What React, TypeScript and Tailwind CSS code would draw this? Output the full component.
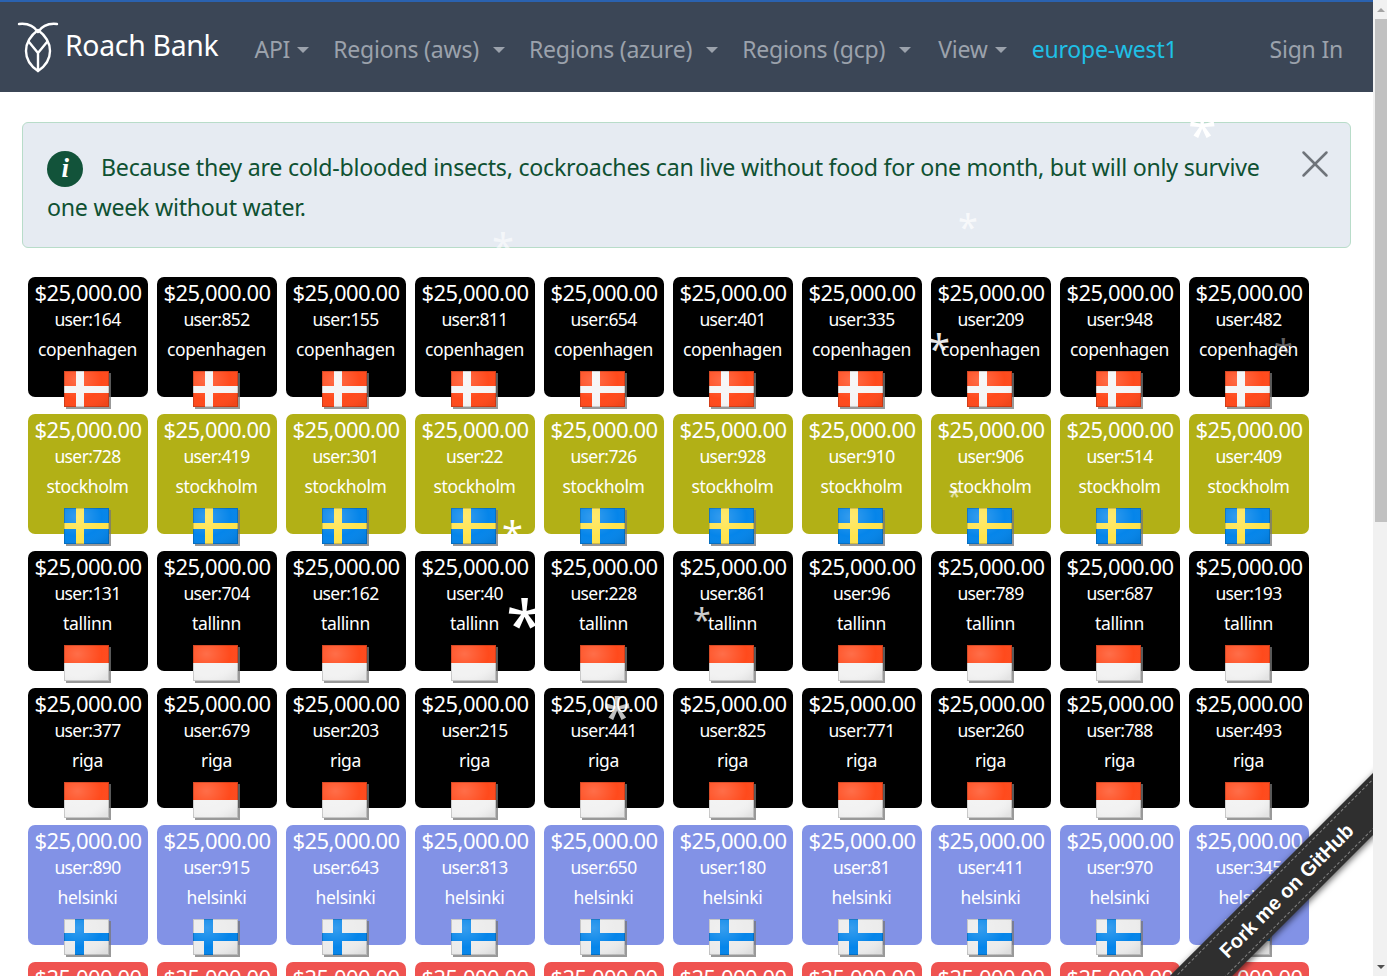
import { X } from 'lucide-react';

const font = { fontFamily: '"Noto Sans", sans-serif' };

const rows = [
  { city: 'copenhagen', bg: 'bg-black', flag: 'dk', users: [164, 852, 155, 811, 654, 401, 335, 209, 948, 482] },
  { city: 'stockholm', bg: 'bg-[#b2b016]', flag: 'se', users: [728, 419, 301, 22, 726, 928, 910, 906, 514, 409] },
  { city: 'tallinn', bg: 'bg-black', flag: 'id', users: [131, 704, 162, 40, 228, 861, 96, 789, 687, 193] },
  { city: 'riga', bg: 'bg-black', flag: 'id', users: [377, 679, 203, 215, 441, 825, 771, 260, 788, 493] },
  { city: 'helsinki', bg: 'bg-[#8292e6]', flag: 'fi', users: [890, 915, 643, 813, 650, 180, 81, 411, 970, 345] },
  { city: 'oslo', bg: 'bg-[#ef5350]', flag: 'dk', users: [101, 102, 103, 104, 105, 106, 107, 108, 109, 110] },
];

const flakes = [
  { x: 1188, y: 108, size: 'text-[52px]', color: 'text-white' },
  { x: 958, y: 209, size: 'text-[36px]', color: 'text-white/70' },
  { x: 492, y: 227, size: 'text-[40px]', color: 'text-white/60' },
  { x: 928, y: 328, size: 'text-[40px]', color: 'text-white/90' },
  { x: 1274, y: 334, size: 'text-[34px]', color: 'text-white/40' },
  { x: 948, y: 484, size: 'text-[24px]', color: 'text-white/60' },
  { x: 502, y: 515, size: 'text-[38px]', color: 'text-white' },
  { x: 506, y: 590, size: 'text-[68px]', color: 'text-white' },
  { x: 693, y: 604, size: 'text-[32px]', color: 'text-white/80' },
  { x: 603, y: 690, size: 'text-[52px]', color: 'text-white/75' },
];

function Flag({ kind }: { kind: string }) {
  return (
    <svg width="48" height="40" viewBox="0 0 48 40" className="block">
      <defs>
        <radialGradient id={`gloss-${kind}`} cx="0.3" cy="0.25" r="0.9">
          <stop offset="0" stopColor="#fff" stopOpacity="0.2" />
          <stop offset="0.6" stopColor="#fff" stopOpacity="0" />
          <stop offset="1" stopColor="#000" stopOpacity="0.06" />
        </radialGradient>
      </defs>
      <rect x="3" y="3" width="45" height="36" fill="#777" opacity="0.75" />
      {kind === 'dk' && (
        <>
          <rect x="1" y="1" width="45" height="36" fill="#ff4a1c" />
          <rect x="13" y="1" width="8" height="36" fill="#f5f5f5" />
          <rect x="1" y="16" width="45" height="7" fill="#f5f5f5" />
        </>
      )}
      {kind === 'se' && (
        <>
          <rect x="1" y="1" width="45" height="36" fill="#0585ea" />
          <rect x="13" y="1" width="8" height="36" fill="#ffe44d" />
          <rect x="1" y="16" width="45" height="6" fill="#ffe44d" />
        </>
      )}
      {kind === 'id' && (
        <>
          <rect x="1" y="1" width="45" height="18" fill="#ff4a1c" />
          <rect x="1" y="19" width="45" height="18" fill="#f2f2f2" />
        </>
      )}
      {kind === 'fi' && (
        <>
          <rect x="1" y="1" width="45" height="36" fill="#ececec" />
          <rect x="12" y="1" width="9" height="36" fill="#0585ea" />
          <rect x="1" y="15" width="45" height="8" fill="#0585ea" />
        </>
      )}
      <rect x="1" y="1" width="45" height="36" fill={`url(#gloss-${kind})`} />
      <rect x="1.5" y="1.5" width="44" height="35" fill="none" stroke="#000" strokeOpacity="0.16" />
    </svg>
  );
}

function Logo() {
  return (
    <svg width="42" height="52" viewBox="0 0 42 52" fill="none" stroke="#fff" strokeWidth="2.4" strokeLinecap="round" strokeLinejoin="round">
      <path d="M2 3C11 2 17 5 21 11C25 5 31 2 40 3" />
      <path d="M21 9C29 15 33 23 33 30C33 39 27 46 21 50C15 46 9 39 9 30C9 23 13 15 21 9Z" />
      <path d="M21 50V32L12 21M21 32L30 21" />
    </svg>
  );
}

function Caret({ spaced }: { spaced?: boolean }) {
  return <span className={`inline-block align-middle border-x-[6.5px] border-t-[6.5px] border-x-transparent border-t-current ${spaced ? 'ml-[14px]' : 'ml-[7px]'} mb-1`} />;
}

function Card({ user, city, bg, flag }: { user: number; city: string; bg: string; flag: string }) {
  return (
    <div className={`${bg} w-[120px] h-[120px] rounded-[7px] flex flex-col items-center text-white shrink-0`}>
      <div className="text-[22px] leading-[32px] tracking-[-0.55px] whitespace-nowrap mt-[-1px]">$25,000.00</div>
      <div className="text-[17.5px] leading-[22px] tracking-[-0.6px] mt-[-0.5px] pr-[1px]">user:{user}</div>
      <div className="text-[17.5px] leading-[24px] tracking-[-0.35px] mt-[7px] pr-[1px]">{city}</div>
      <div className="mt-[9px] self-start ml-[35px]">
        <Flag kind={flag} />
      </div>
    </div>
  );
}

export default function App() {
  return (
    <div className="relative flex h-[976px] w-[1387px] overflow-hidden bg-white" style={font}>
      <div className="relative w-[1373px] h-full overflow-hidden">
        <nav className="h-[92px] bg-[#3b4656] border-t-2 border-[#2a62b0] flex items-center pl-[17px] text-[#9ba2ac] text-[23px] tracking-[-0.2px]">
          <Logo />
          <span className="ml-[6px] text-white text-[28.4px] tracking-[-0.3px] mt-[-3px]">Roach Bank</span>
          <a className="ml-[36px] mt-[4px] whitespace-nowrap">API<Caret /></a>
          <a className="ml-[24px] mt-[4px] whitespace-nowrap">Regions (aws)<Caret spaced /></a>
          <a className="ml-[24px] mt-[4px] whitespace-nowrap">Regions (azure)<Caret spaced /></a>
          <a className="ml-[24px] mt-[4px] whitespace-nowrap">Regions (gcp)<Caret spaced /></a>
          <a className="ml-[27px] mt-[4px] whitespace-nowrap">View<Caret /></a>
          <a className="ml-[25px] mt-[4px] text-[#1fc0e6] whitespace-nowrap">europe-west1</a>
          <a className="ml-auto mr-[30px] mt-[4px] whitespace-nowrap">Sign In</a>
        </nav>

        <div className="mx-[22px] mt-[30px] h-[126px] rounded-[6px] border border-[#b8dcc9] bg-[#e6ebf2] text-[#0f5132] pl-[24px] pt-[24px] pr-[12px] flex items-start">
          <p className="w-[1225px] text-[23.2px] leading-[40px] tracking-[-0.255px]">
            <span className="inline-flex align-middle items-center justify-center w-9 h-9 my-[-4px] rounded-full bg-[#12533a] text-white italic font-bold text-[27px] leading-none mr-[18px] mb-[-2px]" style={{ fontFamily: '"Liberation Serif", serif' }}>i</span>
            Because they are cold-blooded insects, cockroaches can live without food for one month, but will only survive one week without water.
          </p>
          <X className="ml-[21px] mt-[-6px] shrink-0 text-[#6f747a]" size={46} strokeWidth={1.3} />
        </div>

        <div className="mt-[29px] pl-[28px] flex flex-col gap-[17px]">
          {rows.map((row) => (
            <div key={row.city} className="flex gap-[9px]">
              {row.users.map((user) => (
                <Card key={user} user={user} city={row.city} bg={row.bg} flag={row.flag} />
              ))}
            </div>
          ))}
        </div>

        {flakes.map((f, i) => (
          <span key={i} className={`absolute leading-none ${f.size} ${f.color}`} style={{ left: f.x, top: f.y }}>*</span>
        ))}

        {/* ribbon, clipped by the main column */}
        <div className="absolute right-[-116px] bottom-[16px] w-[500px] h-[44px] bg-[#2f2f2f] rotate-[-45deg] shadow-[0_2px_6px_rgba(0,0,0,0.6)] flex items-center justify-center">
          <div className="w-full h-[36px] border-y border-dashed border-white/40 flex items-center justify-center pl-[134px] text-white font-bold text-[20px] whitespace-nowrap" style={{ fontFamily: '"Liberation Sans", sans-serif' }}>
            Fork me on GitHub
          </div>
        </div>
      </div>

      <div className="w-[14px] h-full bg-[#f1f1f1] flex flex-col">
        <div className="h-[19px] flex items-center justify-center pl-[2px]">
          <span className="border-x-[4px] border-b-[4px] border-x-transparent border-b-[#a3a3a3]" />
        </div>
        <div className="ml-[2px] h-[503px] bg-[#c1c1c1]" />
        <div className="mt-auto h-[19px] flex items-center justify-center pl-[2px]">
          <span className="border-x-[4px] border-t-[4px] border-x-transparent border-t-[#505050]" />
        </div>
      </div>
    </div>
  );
}
